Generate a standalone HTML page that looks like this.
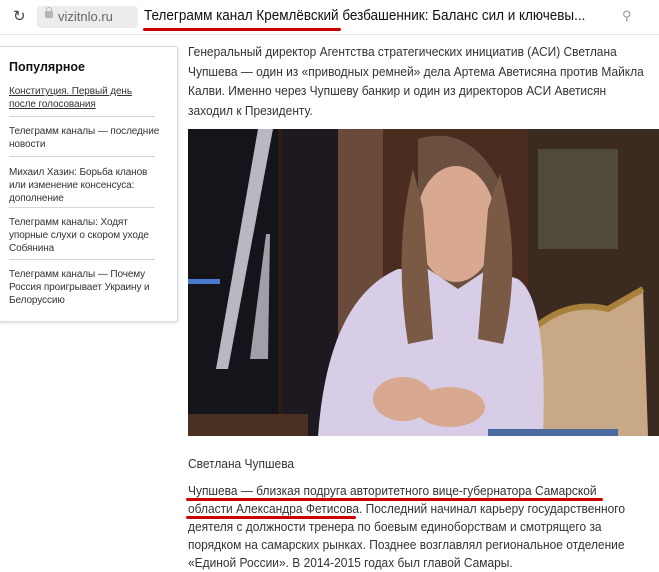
<!DOCTYPE html>
<html><head><meta charset="utf-8"><style>
body{margin:0;width:659px;height:570px;overflow:hidden;background:#fff;font-family:"Liberation Sans",sans-serif;position:relative;color:#222}
.bar{position:absolute;left:0;top:0;width:659px;height:34px;background:#fff;border-bottom:1px solid #e4e4e4}
.dom{position:absolute;left:37px;top:6px;width:101px;height:22px;background:#ececec;border-radius:4px}
.side{position:absolute;left:-2px;top:46px;width:178px;height:274px;background:#fff;border:1px solid #ddd;border-radius:3px;box-shadow:0 1px 3px rgba(0,0,0,.15)}
.side h4{margin:0;position:absolute;left:10px;top:13px;font-size:12.5px;font-weight:bold;color:#111}
.it{position:absolute;left:10px;font-size:10px;line-height:13px;color:#333;white-space:nowrap;letter-spacing:-0.1px}
.hr{position:absolute;left:10px;width:146px;height:1px;background:#d6d6d6}
.t{position:absolute;left:188px;font-size:13px;color:#333;white-space:nowrap;transform:scaleX(0.92);transform-origin:0 0}
</style></head><body>
<div class="bar">
<div style="position:absolute;left:13px;top:7px;font-size:15px;color:#444">↻</div>
<div class="dom"></div>
<div style="position:absolute;left:45px;top:11px;width:8px;height:7px;background:#b5b5b5;border-radius:1px"></div>
<div style="position:absolute;left:46px;top:7px;width:4px;height:5px;border:1.5px solid #b5b5b5;border-bottom:none;border-radius:3px 3px 0 0"></div>
<div style="position:absolute;left:58px;top:9px;font-size:13px;color:#666">vizitnlo.ru</div>
<div style="position:absolute;left:144px;top:8px;font-size:14.5px;color:#111;white-space:nowrap;transform:scaleX(0.93);transform-origin:0 0">Телеграмм канал Кремлёвский безбашенник: Баланс сил и ключевы...</div>
<div style="position:absolute;left:143px;top:28px;width:198px;height:3px;background:#c00;border-radius:2px"></div>
<div style="position:absolute;left:622px;top:8px;font-size:13px;color:#999">⚲</div>
</div>
<div class="side">
<h4>Популярное</h4>
<div class="it" style="top:38px;text-decoration:underline;color:#333">Конституция. Первый день<br>после голосования</div>
<div class="hr" style="top:69px"></div>
<div class="it" style="top:78px">Телеграмм каналы — последние<br>новости</div>
<div class="hr" style="top:109px"></div>
<div class="it" style="top:119px">Михаил Хазин: Борьба кланов<br>или изменение консенсуса:<br>дополнение</div>
<div class="hr" style="top:160px"></div>
<div class="it" style="top:169px">Телеграмм каналы: Ходят<br>упорные слухи о скором уходе<br>Собянина</div>
<div class="hr" style="top:212px"></div>
<div class="it" style="top:221px">Телеграмм каналы — Почему<br>Россия проигрывает Украину и<br>Белоруссию</div>
</div>
<div class="t" style="top:42px;line-height:19.5px">Генеральный директор Агентства стратегических инициатив (АСИ) Светлана<br>Чупшева — один из «приводных ремней» дела Артема Аветисяна против Майкла<br>Калви. Именно через Чупшеву банкир и один из директоров АСИ Аветисян<br>заходил к Президенту.</div>
<svg style="position:absolute;left:188px;top:129px" width="471" height="307" viewBox="0 0 471 307">
<rect width="471" height="307" fill="#2a1d18"/>
<rect x="0" y="0" width="90" height="307" fill="#15141a"/>
<rect x="95" y="0" width="60" height="307" fill="#1e1820"/>
<rect x="150" y="0" width="45" height="307" fill="#6a4a3a"/>
<rect x="195" y="0" width="160" height="307" fill="#4a2c20"/>
<rect x="340" y="0" width="131" height="307" fill="#3a2a20"/>
<rect x="350" y="20" width="80" height="100" fill="#4f4a3a"/>
<polygon points="70,0 85,0 40,240 28,240" fill="#b8b8c0"/>
<polygon points="78,105 82,105 80,230 62,230" fill="#a0a0a8"/>
<rect x="0" y="150" width="32" height="5" fill="#4a7ad0"/>
<path d="M345,200 Q380,170 420,180 L455,160 L460,307 L340,307 Z" fill="#c9a887"/>
<path d="M345,200 Q380,170 420,180 L455,160" stroke="#a8823a" stroke-width="6" fill="none"/>
<path d="M230,10 Q280,-5 310,50 L320,200 L220,230 L230,60 Z" fill="#6b5040"/>
<ellipse cx="268" cy="95" rx="40" ry="58" fill="#d9a890"/>
<path d="M130,307 Q140,170 210,140 L240,140 L270,160 L300,140 L330,150 Q360,170 355,307 Z" fill="#d8cde6"/>
<path d="M225,40 Q205,120 220,215 L245,210 L235,80 Z" fill="#7a5a45"/>
<path d="M312,45 Q335,130 315,215 L290,210 L300,80 Z" fill="#7a5a45"/>
<ellipse cx="215" cy="270" rx="30" ry="22" fill="#d8a891"/>
<ellipse cx="262" cy="278" rx="35" ry="20" fill="#d8a891"/>
<rect x="0" y="285" width="120" height="22" fill="#4a3020"/>
<rect x="300" y="300" width="130" height="7" fill="#4a6aa0"/>
</svg>
<div class="t" style="top:456px">Светлана Чупшева</div>
<div class="t" style="top:482px;line-height:18px">Чупшева — близкая подруга авторитетного вице-губернатора Самарской<br>области Александра Фетисова. Последний начинал карьеру государственного<br>деятеля с должности тренера по боевым единоборствам и смотрящего за<br>порядком на самарских рынках. Позднее возглавлял региональное отделение<br>«Единой России». В 2014-2015 годах был главой  Самары.</div>
<div style="position:absolute;left:186px;top:498px;width:417px;height:3px;background:#c00;border-radius:2px"></div>
<div style="position:absolute;left:186px;top:516px;width:170px;height:3px;background:#c00;border-radius:2px"></div>
</body></html>
